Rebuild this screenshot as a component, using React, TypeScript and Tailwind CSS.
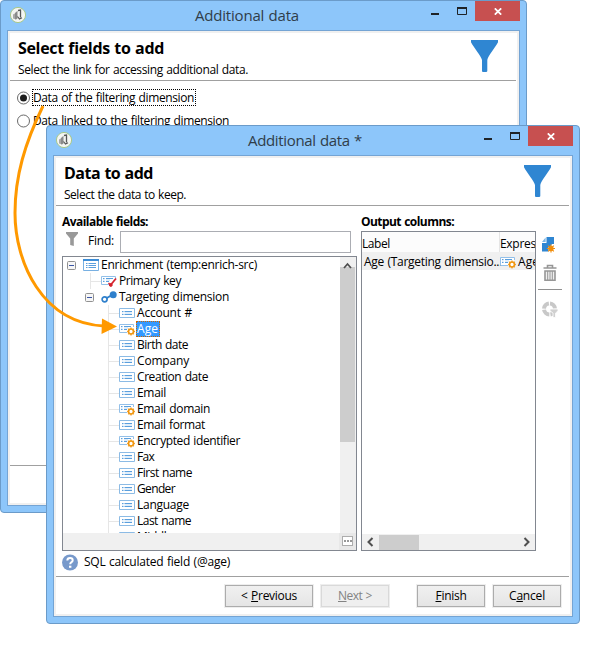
import { useLayoutEffect, useRef, useState, type ReactNode } from "react";

/* Text whose tracking is measured so that it fills the given width. */
function Fit({ w, children, className = "" }: { w: number; children: ReactNode; className?: string }) {
  const ref = useRef<HTMLSpanElement>(null);
  const [gap, setGap] = useState(0);
  useLayoutEffect(() => {
    const el = ref.current;
    if (!el) return;
    const n = (el.textContent ?? "").length;
    setGap((w - el.getBoundingClientRect().width) / n);
  }, [w]);
  return (
    <span ref={ref} className={"inline-block whitespace-pre [word-spacing:0.7px] " + className} style={{ letterSpacing: gap + "px" }}>
      {children}
    </span>
  );
}

function AppIcon() {
  return (
    <svg width="18" height="18" viewBox="0 0 18 18">
      <circle cx="9" cy="9" r="7.6" fill="#f4f5f2" stroke="#a9c98a" strokeWidth="1" />
      <path d="M4 8.5 L7.5 6.5 V13.5 L4 12.5 Z" fill="#a8a8a8" />
      <path d="M6 7 L8.5 4.8 V12.5 L6 13.5 Z" fill="#8a8a8a" />
      <path d="M9 4.5 L11.5 4 V11.5" fill="none" stroke="#555" strokeWidth="1.3" />
      <path d="M8.5 10.5 L10.5 13 L13 11.8" fill="none" stroke="#555" strokeWidth="1.2" />
    </svg>
  );
}

function BigFunnel() {
  return (
    <svg width="27" height="32" viewBox="0 0 27 32">
      <path d="M0 0 H27 V2.2 C24 8 17 15.5 16.3 20 V31 Q16.3 32 15 32 H12 Q11 32 11 31 V20 C10 15.5 3 8 0 2.2 Z" fill="#2f86d2" />
    </svg>
  );
}

function Window({ className, title, titleW, titleX, heading, headingW, sub, subW, children }: {
  className: string; title: string; titleW: number; titleX: string; heading: string; headingW: number;
  sub: string; subW: number; children: ReactNode;
}) {
  return (
    <section className={"absolute flex flex-col rounded-[4px] border border-[#6b9bc9] bg-[#8dc6fa] px-[6px] pb-[6px] " + className}>
      <div className="flex h-[29px] shrink-0 items-start">
        <div className="ml-[2px] mt-[5px]"><AppIcon /></div>
        <div className={"mt-[4px] flex-1 text-[15px] leading-[20px] text-[#303d49] " + titleX}>
          <Fit w={titleW}>{title}</Fit>
        </div>
        <svg width="44" height="20" viewBox="0 0 44 20" className="shrink-0">
          <path d="M0 13 H8" stroke="#1f2327" strokeWidth="2" />
          <path d="M26.5 6.5 H35.5 V13.5 H26.5 Z" fill="none" stroke="#1f2327" />
          <path d="M26 7 H36" stroke="#1f2327" strokeWidth="2" />
        </svg>
        <div className="flex h-[20px] w-[45px] shrink-0 items-center justify-center bg-[#c75050]">
          <svg width="8" height="7" viewBox="0 0 8 7" className="mt-[1px]">
            <path d="M0.8 0.3 L7.2 6.7 M7.2 0.3 L0.8 6.7" stroke="#fff" strokeWidth="1.7" />
          </svg>
        </div>
      </div>
      <div className="flex min-h-0 flex-1 flex-col border border-[#74a4d4] bg-[#f0f0f0] p-[2px]">
        <div className="flex min-h-0 flex-1 flex-col bg-white">
          <header className="mr-px flex h-[48px] shrink-0 justify-between border-b border-[#a0a0a0]">
            <div className="pl-[8px] pt-[5px]">
              <div className="h-[21px] text-[16px] font-bold leading-[21px]"><Fit w={headingW}>{heading}</Fit></div>
              <div className="h-[20px] leading-[21px]"><Fit w={subW}>{sub}</Fit></div>
            </div>
            <div className="mr-[18px] mt-[7px]"><BigFunnel /></div>
          </header>
          {children}
        </div>
      </div>
    </section>
  );
}

function Radio({ on }: { on?: boolean }) {
  return (
    <svg width="14" height="14" viewBox="0 0 14 14" className="shrink-0">
      <circle cx="7.5" cy="7" r="6" fill="#fff" stroke="#6a6a6a" />
      {on && <circle cx="7.5" cy="7" r="3.5" fill="#1c1c1c" />}
    </svg>
  );
}

function Gear({ x, y }: { x: number; y: number }) {
  return (
    <g transform={`translate(${x} ${y})`}>
      <path d="M0 -4 V4 M-4 0 H4 M-2.8 -2.8 L2.8 2.8 M-2.8 2.8 L2.8 -2.8" stroke="#f0a030" strokeWidth="1.3" />
      <circle r="2.4" fill="#fff" stroke="#f0960f" strokeWidth="1.5" />
    </g>
  );
}

type Kind = "field" | "calc" | "root" | "key" | "link";

function NodeIcon({ kind }: { kind: Kind }) {
  if (kind === "link")
    return (
      <svg width="16" height="16" viewBox="0 0 16 16" className="shrink-0">
        <path d="M5 9.5 L11 6" stroke="#2f80cc" strokeWidth="2" />
        <circle cx="3.6" cy="10.3" r="2.5" fill="#fff" stroke="#2f80cc" strokeWidth="1.7" />
        <circle cx="12.2" cy="5.8" r="3.5" fill="#2f80cc" />
      </svg>
    );
  const cut = kind === "calc" || kind === "key";
  return (
    <svg width="16" height="16" viewBox="0 0 16 16" className="shrink-0">
      {kind === "root" ? (
        <>
          <path d="M0.5 2.5 H15.5 V13.5 H0.5 Z" fill="#fff" stroke="#78b0e2" />
          <path d="M0 3 H16" stroke="#3d8dd6" strokeWidth="2" />
          <path d="M3 6.5 H4.5 M5.5 6.5 H13 M3 8.5 H4.5 M5.5 8.5 H13 M3 10.5 H4.5 M5.5 10.5 H13" stroke="#5b9fdd" />
        </>
      ) : cut ? (
        <>
          <path d="M8 11.5 H0.5 V3.5 H14.5 V6" fill="#fff" stroke="#93c0e9" />
          <path d="M2 5.5 H3.5 M5 5.5 H12 M2 8.5 H3.5 M5 8.5 H8" stroke="#5b9fdd" />
          <path d="M2 7 H3.5 M5 7 H9" stroke="#bcd8f2" />
        </>
      ) : (
        <>
          <path d="M0.5 3.5 H15.5 V12.5 H0.5 Z" fill="#fff" stroke="#8cbbe5" />
          <path d="M3 6.5 H4.5 M5.5 6.5 H13 M3 9.5 H4.5 M5.5 9.5 H13" stroke="#5b9fdd" strokeWidth="1.2" />
          <path d="M3 8 H4.5 M5.5 8 H13" stroke="#c4ddf4" />
        </>
      )}
      {kind === "calc" && <Gear x={12} y={10.5} />}
      {kind === "key" && (
        <g stroke="#d5222c" fill="#d5222c">
          <path d="M15 5.5 L10 11.5" strokeWidth="1.8" />
          <circle cx="9.8" cy="12" r="1.4" />
          <path d="M7.5 10 L9.5 12" strokeWidth="1.5" />
        </g>
      )}
    </svg>
  );
}

function Expander() {
  return (
    <svg width="9" height="9" viewBox="0 0 9 9" className="shrink-0">
      <rect x="0.5" y="0.5" width="8" height="8" rx="1" fill="#f6f6f6" stroke="#919191" />
      <path d="M2 4.5 H7" stroke="#3a55a5" />
    </svg>
  );
}

const leaves: { label: string; w: number; kind?: Kind }[] = [
  { label: "Account #", w: 55 },
  { label: "Age", w: 21, kind: "calc" },
  { label: "Birth date", w: 51 },
  { label: "Company", w: 52 },
  { label: "Creation date", w: 71 },
  { label: "Email", w: 29 },
  { label: "Email domain", w: 73, kind: "calc" },
  { label: "Email format", w: 68 },
  { label: "Encrypted identifier", w: 103, kind: "calc" },
  { label: "Fax", w: 17 },
  { label: "First name", w: 55 },
  { label: "Gender", w: 38 },
  { label: "Language", w: 52 },
  { label: "Last name", w: 54 },
  { label: "Middle name", w: 69 },
];

function Tree() {
  return (
    <div className="flex h-[295px] w-[295px] flex-col border border-[#828790]">
      <div className="flex h-[276px] shrink-0 justify-between overflow-hidden">
        <div>
          <div className="flex h-[16px] items-center pl-[4px]">
            <Expander />
            <div className="ml-[7px] flex items-center"><NodeIcon kind="root" /></div>
            <Fit w={156} className="ml-[2px]">Enrichment (temp:enrich-src)</Fit>
          </div>
          <div className="flex h-[16px] items-center pl-[27px]">
            <div className="h-full border-l border-[#e6e6e6]" />
            <div className="w-[10px] border-t border-[#e6e6e6]" />
            <NodeIcon kind="key" />
            <Fit w={62} className="ml-[2px]">Primary key</Fit>
          </div>
          <div className="flex h-[16px] items-center pl-[22px]">
            <Expander />
            <div className="ml-[7px]"><NodeIcon kind="link" /></div>
            <Fit w={110} className="ml-[2px]">Targeting dimension</Fit>
          </div>
          {leaves.map((l) => (
            <div key={l.label} className="flex h-[16px] items-center pl-[45px]">
              <div className="h-full border-l border-[#e6e6e6]" />
              <div className="w-[10px] border-t border-[#e6e6e6]" />
              <NodeIcon kind={l.kind ?? "field"} />
              {l.label === "Age" ? (
                <span className="ml-[1px] h-[16px] w-[24px] bg-[#3399ff] pl-[1px] leading-[16px] text-white outline-1 -outline-offset-1 outline-dotted outline-[#cc6600]">
                  <Fit w={21}>Age</Fit>
                </span>
              ) : (
                <Fit w={l.w} className="ml-[2px]">{l.label}</Fit>
              )}
            </div>
          ))}
        </div>
        <div className="w-[16px] bg-[#f0f0f0]">
          <svg width="16" height="17" viewBox="0 0 16 17">
            <path d="M4 11 L7.5 7 L11 11" fill="none" stroke="#505050" strokeWidth="1.8" />
          </svg>
          <div className="-mt-[7px] h-[175px] w-[15px] bg-[#cdcdcd]" />
        </div>
      </div>
      <div className="flex flex-1 justify-end bg-[#f0f0f0]">
        <div className="flex w-[17px] items-start bg-[#e8e8e8] pl-[3px] pt-[3px]">
          <div className="flex h-[10px] w-[11px] items-center justify-center gap-[1px] border border-[#adadad] bg-white">
            <i className="size-[2px] bg-[#999]" /><i className="size-[2px] bg-[#999]" /><i className="size-[2px] bg-[#999]" />
          </div>
        </div>
      </div>
    </div>
  );
}

function Output() {
  return (
    <div className="flex h-[320px] w-[175px] flex-col overflow-hidden border border-[#828790]">
      <div className="flex h-[20px] shrink-0 bg-[#fcfcfc] leading-[23px]">
        <div className="w-[138px] shrink-0 border-r border-[#e5e5e5]"><Fit w={28}>Label</Fit></div>
        <Fit w={58}>Expression</Fit>
      </div>
      <div className="flex h-[18px] shrink-0 items-center bg-[#f0f0f0] pl-[2px] pt-[2px]">
        <span className="w-[136px] shrink-0 whitespace-nowrap"><Fit w={138}>Age (Targeting dimensio...</Fit></span>
        <NodeIcon kind="calc" />
        <Fit w={21} className="ml-[2px]">Age</Fit>
      </div>
      <div className="flex-1" />
      <div className="flex h-[16px] shrink-0 items-center bg-[#f0f0f0]">
        <svg width="17" height="16" viewBox="0 0 17 16"><path d="M10.5 4 L6.5 8 L10.5 12" fill="none" stroke="#505050" strokeWidth="2" /></svg>
        <div className="h-[15px] w-[40px] bg-[#cdcdcd]" />
        <svg width="17" height="16" viewBox="0 0 17 16" className="ml-auto"><path d="M6.5 4 L10.5 8 L6.5 12" fill="none" stroke="#505050" strokeWidth="2" /></svg>
      </div>
    </div>
  );
}

function SideTools() {
  return (
    <div className="ml-[2px] mt-[5px] flex w-[24px] flex-col items-center">
      <svg width="16" height="18" viewBox="0 0 16 18">
        <path d="M4.5 1 H12 V8 L10 8 L8 11 L6.5 11 V15.5 H0 V7 H4.5 Z" fill="#2f86d2" />
        <path d="M0 6 L3.6 1.5 V6 Z" fill="#7db5e5" />
        <path d="M9 8.5 V16.5 M5 12.5 H13 M6.2 9.7 L11.8 15.3 M6.2 15.3 L11.8 9.7" stroke="#f28d0a" strokeWidth="1.2" />
        <circle cx="9" cy="12.5" r="2.6" fill="#f28d0a" />
      </svg>
      <svg width="14" height="18" viewBox="0 0 14 18" className="mt-[10px]">
        <path d="M0.5 4 H13.5 M4.5 3.5 V1.5 H9.5 V3.5" fill="none" stroke="#969696" strokeWidth="1.6" />
        <path d="M2 7 H12 V16.3 H2 Z" fill="#f0f0f0" stroke="#969696" strokeWidth="1.6" />
        <path d="M4.7 7 V16 M7 7 V16 M9.3 7 V16" stroke="#969696" />
      </svg>
      <div className="mt-[7px] h-px w-[24px] bg-[#909090]" />
      <svg width="17" height="18" viewBox="0 0 17 18" className="mt-[10px]">
        <circle cx="7.5" cy="9" r="5.5" fill="none" stroke="#c8c8c8" strokeWidth="4" strokeDasharray="7.4 1.2" />
        <path d="M8 9 H16 V11 L13.5 13 V17.5 H11 V13 L8 11 Z" fill="#d0d0d0" stroke="#fff" strokeWidth="0.8" />
      </svg>
    </div>
  );
}

function Button({ w, text, children, disabled }: { w: string; text: number; children: ReactNode; disabled?: boolean }) {
  return (
    <div className={"flex h-[22px] items-center justify-center border outline-1 outline-[#eeeeee] " + w + (disabled ? " border-[#d9d9d9] bg-[#efefef] text-[#838383]" : " border-[#acacac] bg-linear-to-b from-[#f0f0f0] to-[#e5e5e5]")}>
      <Fit w={text}>{children}</Fit>
    </div>
  );
}

const U = ({ children }: { children: string }) => <span className="underline decoration-1 underline-offset-[1px]">{children}</span>;

export default function App() {
  return (
    <main className="relative h-[654px] w-[614px] overflow-hidden bg-white font-['Open_Sans','Noto_Sans',sans-serif] text-[12px] leading-[16px] text-black">
      <Window className="left-0 top-0 h-[513px] w-[527px]" title="Additional data" titleW={104} titleX="pl-[168px]" heading="Select fields to add" headingW={146} sub="Select the link for accessing additional data." subW={230}>
        <div className="flex flex-1 flex-col pl-[6px] pt-[8px]">
          <div className="flex h-[17px] items-center">
            <Radio on />
            <span className="ml-[2px] h-[17px] w-[164px] border border-dotted border-black leading-[15px]"><Fit w={161}>Data of the filtering dimension</Fit></span>
          </div>
          <div className="mt-[6px] flex h-[17px] items-center">
            <Radio />
            <Fit w={196} className="ml-[3px]">Data linked to the filtering dimension</Fit>
          </div>
        </div>
        <div className="mr-px h-[38px] border-t border-[#a0a0a0]" />
      </Window>

      <Window className="left-[46px] top-[125px] h-[499px] w-[534px]" title="Additional data *" titleW={114} titleX="pl-[175px]" heading="Data to add" headingW={89} sub="Select the data to keep." subW={122}>
        <div className="flex h-[345px] shrink-0 pl-[6px] pt-[6px]">
          <div className="w-[299px]">
            <div className="h-[19px] font-bold leading-[19px]"><Fit w={86}>Available fields:</Fit></div>
            <div className="flex h-[25px] items-start">
              <svg width="12" height="14" viewBox="0 0 12 14" className="ml-[4px] mt-[1px]">
                <path d="M0 0 H12 V1.5 L7.8 6.5 V14 L4.2 13 V6.5 L0 1.5 Z" fill="#999" />
              </svg>
              <Fit w={26} className="ml-[10px] mt-[2px]">Find:</Fit>
              <div className="ml-[6px] h-[22px] w-[231px] border border-[#abadb3] bg-white" />
            </div>
            <Tree />
          </div>
          <div>
            <div className="h-[19px] font-bold leading-[19px]"><Fit w={93}>Output columns:</Fit></div>
            <Output />
          </div>
          <div className="pt-[19px]"><SideTools /></div>
        </div>
        <div className="mr-px flex h-[26px] shrink-0 items-center border-b border-[#a0a0a0] pl-[6px]">
          <svg width="16" height="17" viewBox="0 0 16 17" className="mt-[-3px]">
            <circle cx="8" cy="8.5" r="8" fill="#7799cb" />
            <path d="M5.3 6.5 Q5.4 4 8 4 Q10.7 4 10.7 6.2 Q10.7 7.5 9.2 8.4 Q8.2 9 8.2 10.3" fill="none" stroke="#fff" strokeWidth="2" />
            <path d="M7 11.7 H9.4 V13.8 H7 Z" fill="#fff" />
          </svg>
          <Fit w={146} className="-mt-[3px] ml-[6px]">SQL calculated field (@age)</Fit>
        </div>
        <footer className="flex pl-[169px] pt-[8px]">
          <Button w="w-[88px]" text={56}>&lt; <U>P</U>revious</Button>
          <div className="ml-[8px]"><Button w="w-[68px]" text={34} disabled><U>N</U>ext &gt;</Button></div>
          <div className="ml-[28px]"><Button w="w-[68px]" text={31}><U>F</U>inish</Button></div>
          <div className="ml-[8px]"><Button w="w-[68px]" text={36}>C<U>a</U>ncel</Button></div>
        </footer>
      </Window>

      <svg width="130" height="240" viewBox="0 0 130 240" className="pointer-events-none absolute left-0 top-[100px]">
        <path d="M43 6 C25 43 15 76 15 113 C15 162 42 223 104 226" fill="none" stroke="#ff9900" strokeWidth="3" />
        <path d="M102 218.5 L117 226.5 L101.5 234 Z" fill="#ff9900" />
      </svg>
    </main>
  );
}
